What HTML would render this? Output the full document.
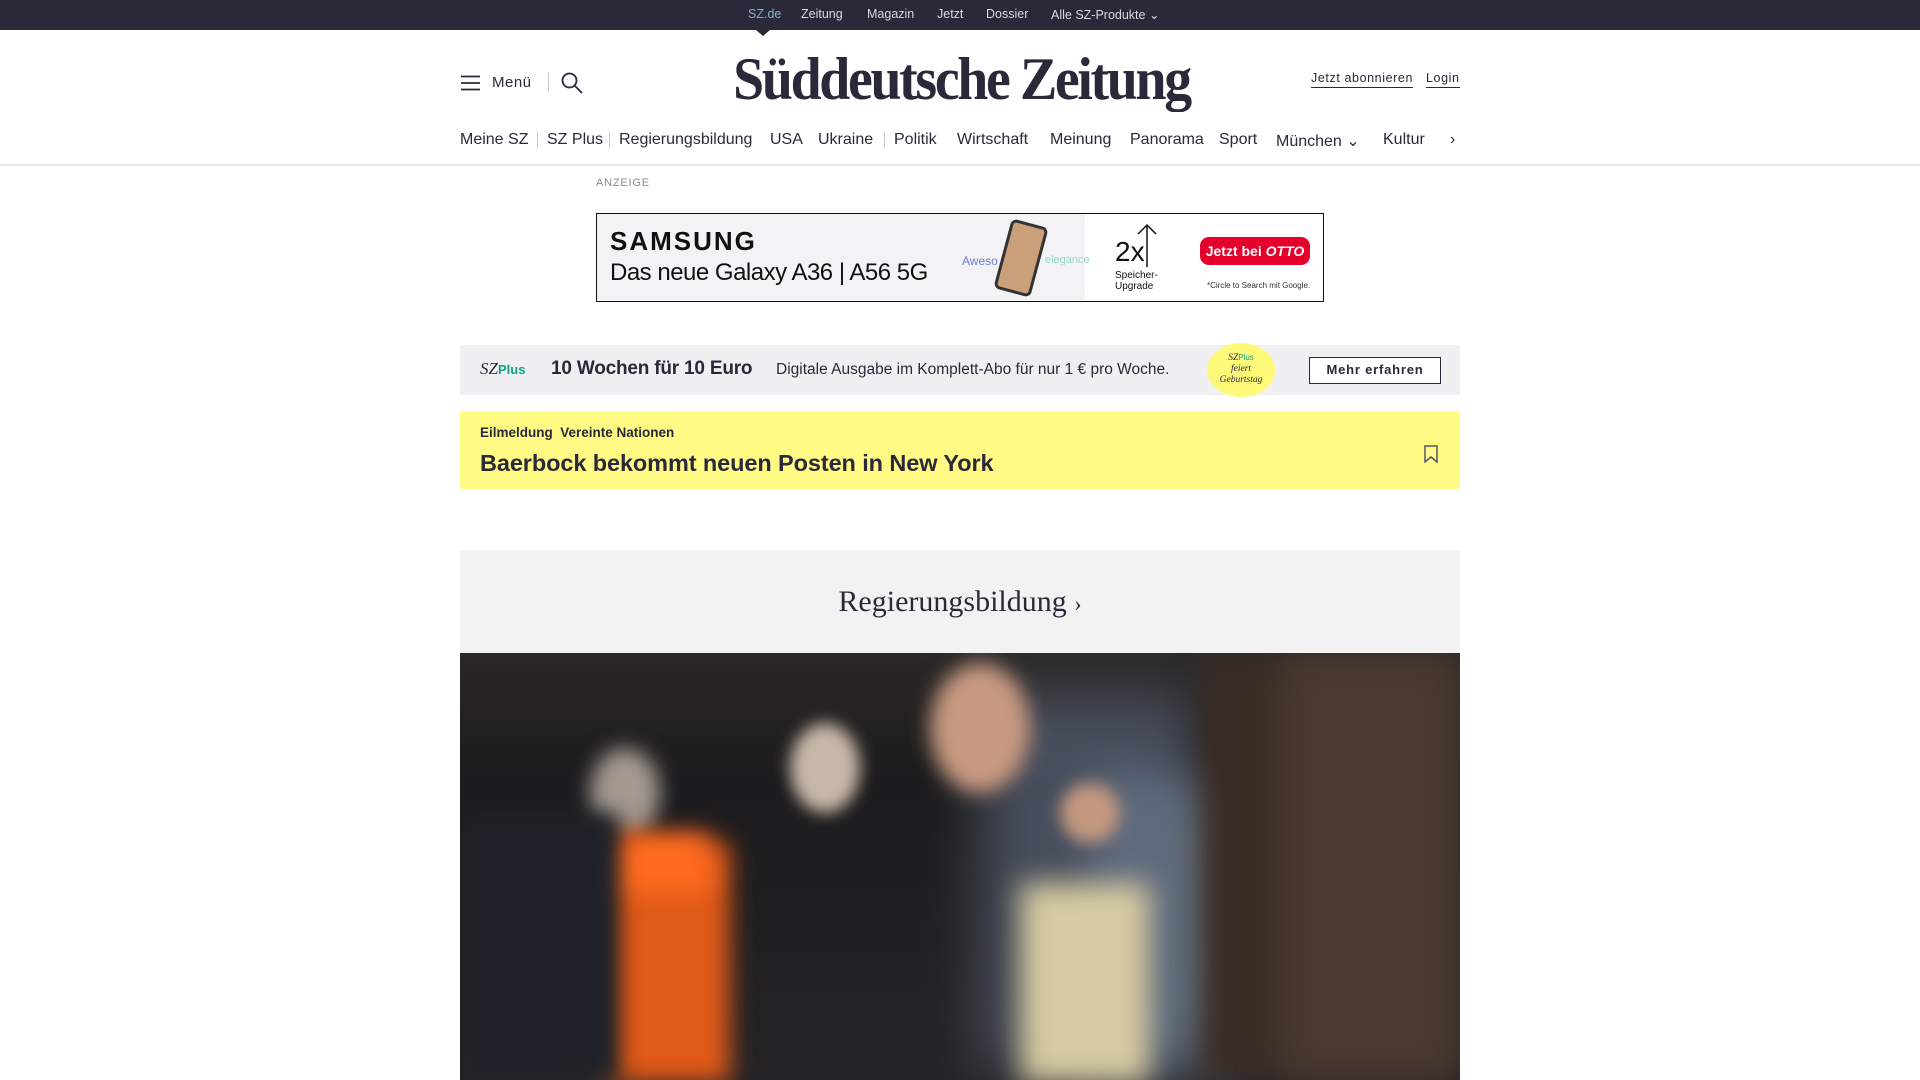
<!DOCTYPE html>
<html><head><meta charset="utf-8"><style>
*{margin:0;padding:0;box-sizing:border-box}
body{width:1920px;height:1080px;overflow:hidden;background:#fff;font-family:"Liberation Sans",sans-serif;color:#29293a;position:relative}
.abs{position:absolute}
.top{left:0;top:0;width:1920px;height:30px;background:#29293a;color:#d8d8de;font-size:12.5px}
.top span{position:absolute;top:7px}
.nav span{position:absolute;top:131px;font-size:16px;color:#29293a;white-space:nowrap}
.sep{position:absolute;width:1px;background:#c8c8cc}
</style></head><body>
<div class="abs top">
<span style="left:748px;color:#7fb3c9">SZ.de</span>
<span style="left:801px">Zeitung</span>
<span style="left:867px">Magazin</span>
<span style="left:937px">Jetzt</span>
<span style="left:986px">Dossier</span>
<span style="left:1051px">Alle SZ-Produkte &#8964;</span>
</div>
<div class="abs" style="left:756px;top:30px;width:0;height:0;border-left:7px solid transparent;border-right:7px solid transparent;border-top:6px solid #29293a"></div>

<svg class="abs" style="left:461px;top:75px" width="20" height="16"><path d="M0 1.5H19M0 8H19M0 14.5H19" stroke="#29293a" stroke-width="1.8"/></svg>
<div class="abs" style="left:492px;top:74px;font-size:15px;letter-spacing:.5px">Menü</div>
<div class="sep" style="left:548px;top:73px;height:18px"></div>
<svg class="abs" style="left:561px;top:72px" width="22" height="22"><circle cx="8.5" cy="8.5" r="7" fill="none" stroke="#29293a" stroke-width="1.8"/><path d="M13.5 13.5L21 21" stroke="#29293a" stroke-width="1.8"/></svg>

<div class="abs" style="left:622px;top:44px;width:678px;display:flex;justify-content:center">
<div style="white-space:nowrap;font-family:'Liberation Serif',serif;font-size:60px;font-weight:bold;letter-spacing:-2.5px;color:#29293a;line-height:70px;transform:scaleX(0.93)">Süddeutsche Zeitung</div>
</div>

<div class="abs" style="left:1311px;top:71px;font-size:12.5px;letter-spacing:.6px;border-bottom:1px solid #29293a;padding-bottom:2px">Jetzt abonnieren</div>
<div class="abs" style="left:1426px;top:71px;font-size:12.5px;letter-spacing:.6px;border-bottom:1px solid #29293a;padding-bottom:2px">Login</div>

<div class="nav">
<span style="left:460px">Meine SZ</span>
<span style="left:547px">SZ Plus</span>
<span style="left:619px">Regierungsbildung</span>
<span style="left:770px">USA</span>
<span style="left:818px">Ukraine</span>
<span style="left:894px">Politik</span>
<span style="left:957px">Wirtschaft</span>
<span style="left:1050px">Meinung</span>
<span style="left:1130px">Panorama</span>
<span style="left:1219px">Sport</span>
<span style="left:1276px">München &#8964;</span>
<span style="left:1383px">Kultur</span>
<span style="left:1450px">›</span>
</div>
<div class="sep" style="left:537px;top:132px;height:16px"></div>
<div class="sep" style="left:609px;top:132px;height:16px"></div>
<div class="sep" style="left:884px;top:132px;height:16px"></div>
<div class="abs" style="left:0;top:164px;width:1920px;height:2px;background:#e6e6e8"></div>

<div class="abs" style="left:596px;top:177px;font-size:11px;color:#8a8a90;letter-spacing:.8px">ANZEIGE</div>
<div class="abs" style="left:596px;top:213px;width:728px;height:89px;border:1.5px solid #111;background:#fff">
 <div class="abs" style="left:0;top:0;width:488px;height:86px;background:#f3f3f5"></div>
 <div class="abs" style="left:13px;top:12px;font-size:26px;font-weight:bold;letter-spacing:2px;color:#111">SAMSUNG</div>
 <div class="abs" style="left:13px;top:45px;font-size:24px;color:#111;letter-spacing:-.5px">Das neue Galaxy A36 | A56 5G</div>
 <div class="abs" style="left:365px;top:40px;font-size:12px;color:#6a7cd8">Aweso</div>
 <div class="abs" style="left:405px;top:8px;width:38px;height:72px;border-radius:6px;background:#c9a07a;border:3px solid #333;transform:rotate(15deg)"></div>
 <div class="abs" style="left:448px;top:40px;font-size:11px;color:#8fd8c8">elegance</div>
 <div class="abs" style="left:518px;top:22px;font-size:28px;color:#111">2x</div>
 <svg class="abs" style="left:538px;top:8px" width="24" height="46"><path d="M12 45V3M3 12L12 3L21 12" fill="none" stroke="#111" stroke-width="1.5"/></svg>
 <div class="abs" style="left:518px;top:56px;font-size:10px;line-height:11px;color:#111">Speicher-<br>Upgrade</div>
 <div class="abs" style="left:603px;top:23px;width:110px;height:28px;border-radius:9px;background:#e4002b;color:#fff;font-size:14px;font-weight:bold;text-align:center;line-height:28px">Jetzt bei <i>OTTO</i></div>
 <div class="abs" style="left:610px;top:67px;font-size:8px;color:#333">*Circle to Search mit Google.</div>
</div>

<div class="abs" style="left:460px;top:345px;width:1000px;height:50px;background:#f0f0f2"></div>
<div class="abs" style="left:480px;top:359px;font-family:'Liberation Serif',serif;font-size:17px;font-style:italic;color:#29293a">SZ<span style="font-family:'Liberation Sans';font-style:normal;font-weight:bold;color:#12a085;font-size:13px">Plus</span></div>
<div class="abs" style="left:551px;top:358px;font-size:19px;font-weight:bold;letter-spacing:-.2px">10 Wochen für 10 Euro</div>
<div class="abs" style="left:776px;top:361px;font-size:15.5px">Digitale Ausgabe im Komplett-Abo für nur 1 € pro Woche.</div>
<div class="abs" style="left:1207px;top:343px;width:68px;height:54px;border-radius:50%;background:#fff97a;text-align:center;font-family:'Liberation Serif',serif;font-size:9.5px;font-style:italic;line-height:11px;padding-top:9px">SZ<span style="color:#12a085;font-style:normal;font-family:'Liberation Sans';font-size:8px">Plus</span><br>feiert<br>Geburtstag</div>
<div class="abs" style="left:1309px;top:357px;width:132px;height:27px;border:1.5px solid #29293a;background:#fff;font-size:13px;font-weight:bold;letter-spacing:.8px;text-align:center;line-height:24px">Mehr erfahren</div>

<div class="abs" style="left:460px;top:411px;width:1000px;height:78px;background:#fffb85"></div>
<div class="abs" style="left:480px;top:425px;font-size:13.5px;font-weight:bold">Eilmeldung&nbsp; Vereinte Nationen</div>
<div class="abs" style="left:480px;top:450px;font-size:23.5px;font-weight:bold;letter-spacing:-.1px">Baerbock bekommt neuen Posten in New York</div>
<svg class="abs" style="left:1424px;top:445px" width="14" height="18"><path d="M1 1H13V17L7 12L1 17Z" fill="none" stroke="#55556a" stroke-width="1.5"/></svg>

<div class="abs" style="left:460px;top:550px;width:1000px;height:103px;background:#f2f2f3"></div>
<div class="abs" style="left:460px;top:585px;width:1000px;text-align:center;font-family:'Liberation Serif',serif;font-size:30px;color:#29293a">Regierungsbildung <span style="font-size:22px">›</span></div>

<div class="abs" style="left:460px;top:653px;width:1000px;height:427px;overflow:hidden;background:linear-gradient(180deg,#2a2826 0%,#1c1b1d 30%,#242325 100%)">
 <div class="abs" style="left:520px;top:40px;width:220px;height:380px;background:#5a6478;filter:blur(30px);opacity:.7"></div>
 <div class="abs" style="left:630px;top:120px;width:150px;height:300px;background:#8aa0b8;filter:blur(20px);opacity:.35"></div>
 <div class="abs" style="left:740px;top:150px;width:120px;height:220px;background:#cdd8e0;filter:blur(30px);opacity:.3"></div>
 <div class="abs" style="left:470px;top:10px;width:100px;height:130px;border-radius:50%;background:#c99a82;filter:blur(10px)"></div>
 <div class="abs" style="left:330px;top:70px;width:70px;height:90px;border-radius:50%;background:#c8b8a8;filter:blur(8px)"></div>
 <div class="abs" style="left:130px;top:95px;width:70px;height:90px;border-radius:50%;background:#a49a92;filter:blur(10px)"></div>
 <div class="abs" style="left:140px;top:190px;width:130px;height:240px;background:#e05a18;filter:blur(12px)"></div>
 <div class="abs" style="left:150px;top:180px;width:100px;height:60px;background:#ff6a20;filter:blur(12px)"></div>
 <div class="abs" style="left:600px;top:130px;width:60px;height:60px;border-radius:50%;background:#c49880;filter:blur(8px)"></div>
 <div class="abs" style="left:560px;top:230px;width:130px;height:200px;background:#d6caa2;filter:blur(14px)"></div>
 <div class="abs" style="left:0;top:160px;width:160px;height:270px;background:#1e2228;filter:blur(10px)"></div>
 <div class="abs" style="left:740px;top:0;width:260px;height:427px;background:#3a2c26;filter:blur(14px)"></div>
 <div class="abs" style="left:820px;top:0;width:180px;height:427px;background:#4a3a32;filter:blur(20px)"></div>
</div>
</body></html>
